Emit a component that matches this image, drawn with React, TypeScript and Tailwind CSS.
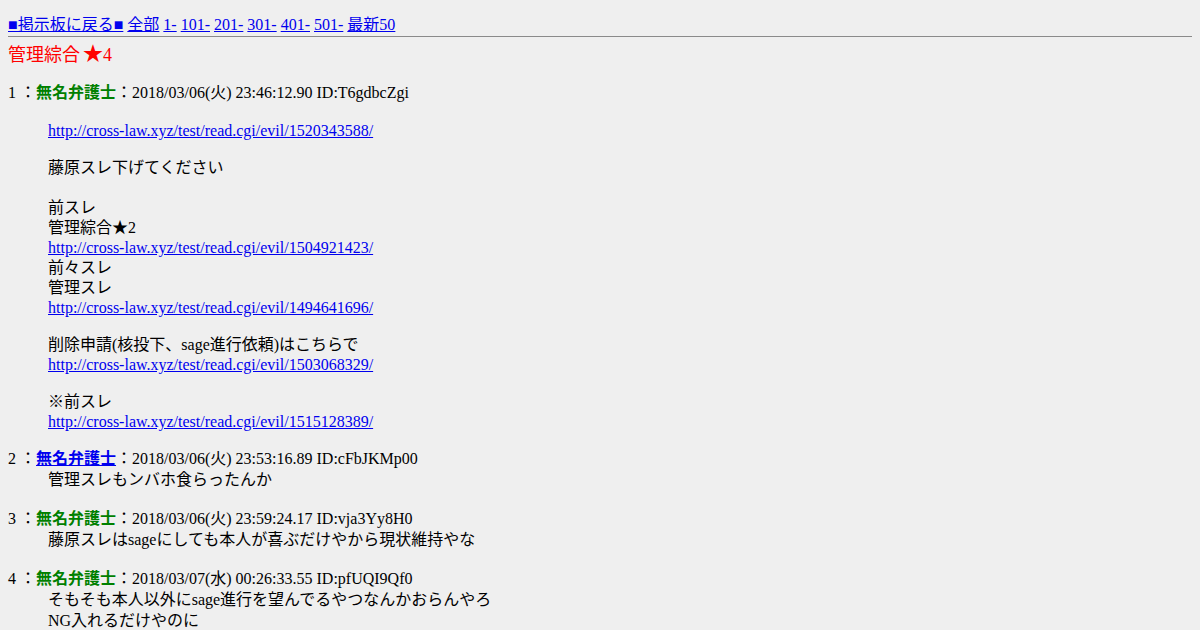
import React from "react";

const FONT = "font-['Liberation_Serif','Noto_Sans_CJK_JP',serif]";

function A({ children }: { children: React.ReactNode }) {
  return <a href="#" className="text-[#0000ee] underline">{children}</a>;
}

function Blank({ h }: { h: number }) {
  const cls: Record<number, string> = {
    17: "h-[17px]",
    18: "h-[18px]",
    19: "h-[19px]",
    20: "h-[20px]",
  };
  return <div className={cls[h]} />;
}

function Dt({ n, id, date, mail }: { n: number; id: string; date: string; mail?: boolean }) {
  return (
    <div className="h-[20px] leading-[20px] whitespace-nowrap">
      {n} ：
      {mail ? (
        <a href="#" className="font-bold text-[#0000ee] underline">無名弁護士</a>
      ) : (
        <b className="font-bold text-[#008000]">無名弁護士</b>
      )}
      ：{date} ID:{id}
    </div>
  );
}

function L({ children, h = 20 }: { children: React.ReactNode; h?: number }) {
  return <div className={h === 21 ? "h-[21px] leading-[21px] whitespace-nowrap" : "h-[20px] leading-[20px] whitespace-nowrap"}>{children}</div>;
}

export default function App() {
  return (
    <div className={`min-h-screen bg-[#efefef] px-2 pt-[15px] text-[16px] text-black ${FONT}`}>
      <div className="h-[20px] leading-[20px] whitespace-nowrap">
        <A>■掲示板に戻る■</A> <A>全部</A> <A>1-</A> <A>101-</A> <A>201-</A> <A>301-</A> <A>401-</A> <A>501-</A> <A>最新50</A>
      </div>
      <div className="mt-px h-px bg-[#8a8a8a]" />
      <div className="mt-[5px] h-[24px] whitespace-nowrap text-[18px] leading-[24px] text-[#ff0000]">
        管理綜合<span className="ml-[3px] text-[20px]">★</span>4
      </div>
      <div className="mt-[17px]">
        <Dt n={1} date="2018/03/06(火) 23:46:12.90" id="T6gdbcZgi" />
        <div className="ml-10">
          <Blank h={18} />
          <L><A>http://cross-law.xyz/test/read.cgi/evil/1520343588/</A></L>
          <Blank h={17} />
          <L>藤原スレ下げてください</L>
          <Blank h={20} />
          <L>前スレ</L>
          <L>管理綜合★2</L>
          <L><A>http://cross-law.xyz/test/read.cgi/evil/1504921423/</A></L>
          <L>前々スレ</L>
          <L>管理スレ</L>
          <L><A>http://cross-law.xyz/test/read.cgi/evil/1494641696/</A></L>
          <Blank h={17} />
          <L>削除申請(核投下、sage進行依頼)はこちらで</L>
          <L><A>http://cross-law.xyz/test/read.cgi/evil/1503068329/</A></L>
          <Blank h={17} />
          <L>※前スレ</L>
          <L><A>http://cross-law.xyz/test/read.cgi/evil/1515128389/</A></L>
          <Blank h={17} />
        </div>
        <Dt n={2} date="2018/03/06(火) 23:53:16.89" id="cFbJKMp00" mail />
        <div className="ml-10">
          <L h={21}>管理スレもンバホ食らったんか</L>
          <Blank h={19} />
        </div>
        <Dt n={3} date="2018/03/06(火) 23:59:24.17" id="vja3Yy8H0" />
        <div className="ml-10">
          <L h={21}>藤原スレはsageにしても本人が喜ぶだけやから現状維持やな</L>
          <Blank h={19} />
        </div>
        <Dt n={4} date="2018/03/07(水) 00:26:33.55" id="pfUQI9Qf0" />
        <div className="ml-10">
          <L h={21}>そもそも本人以外にsage進行を望んでるやつなんかおらんやろ</L>
          <L h={21}>NG入れるだけやのに</L>
          <Blank h={19} />
        </div>
      </div>
    </div>
  );
}
